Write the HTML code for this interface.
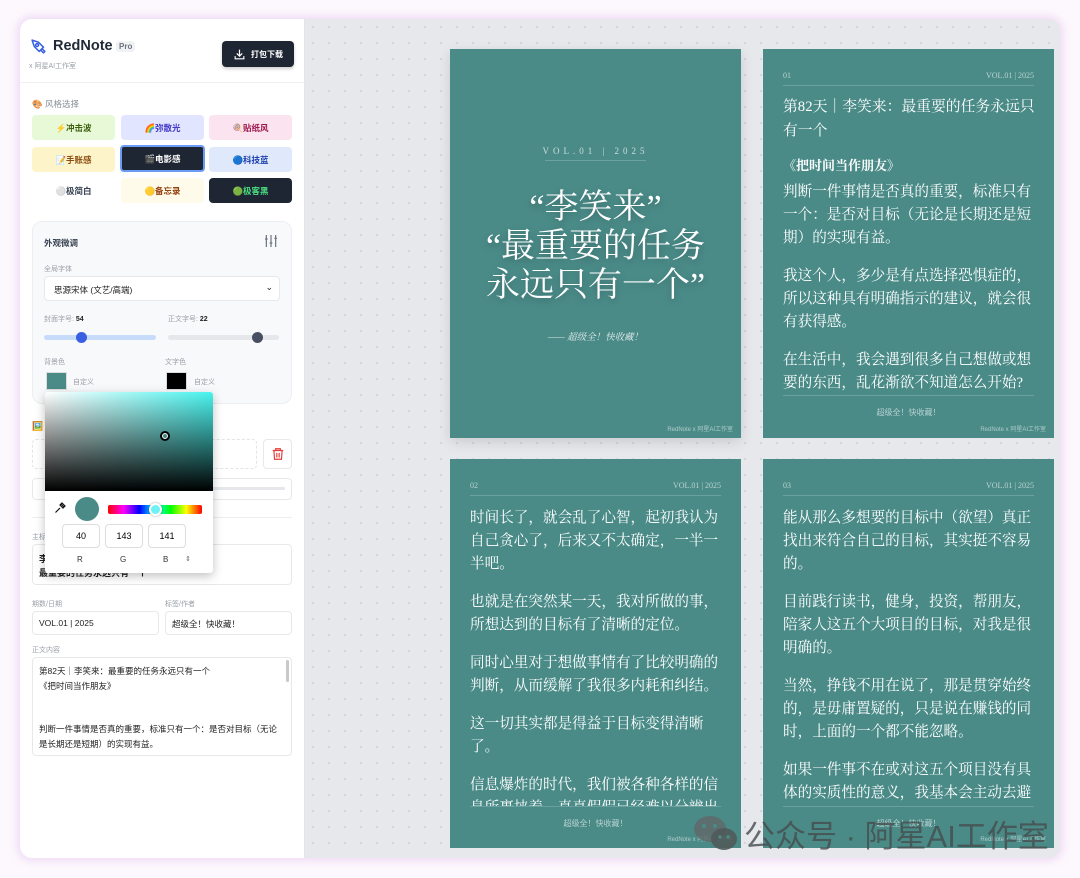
<!DOCTYPE html>
<html><head><meta charset="utf-8">
<style>
*{margin:0;padding:0;box-sizing:border-box}
body{width:1080px;height:878px;background:#fdf8fd;font-family:"Liberation Sans","Noto Sans CJK SC",sans-serif;position:relative;overflow:hidden}
.frame{position:absolute;left:20px;top:19px;width:1040px;height:839px;border-radius:12px;overflow:hidden;background:#e6e7eb;box-shadow:0 0 8px 3px rgba(230,200,240,.6)}
.left{position:absolute;left:0;top:0;width:285px;height:839px;background:#fff;border-right:1px solid #e4e4e8}
.right{position:absolute;left:285px;top:0;width:755px;height:839px;background-color:#e7e8ec;background-image:radial-gradient(#d2d4da 1px,transparent 1.2px);background-size:16px 16px}
.a{position:absolute}
.lbl{font-size:7px;color:#9aa0a8}
.btn{position:absolute;height:25px;width:83px;border-radius:4px;font-size:8.5px;font-weight:bold;display:flex;align-items:center;justify-content:center;gap:2px}
.box{position:absolute;background:#fff;border:1px solid #e6e8ec;border-radius:4px}
.card{position:absolute;width:291px;height:389px;background:#4a8b88;color:#fff;font-family:"Liberation Serif","Noto Serif CJK SC",serif;overflow:hidden}
.hd{position:absolute;left:20px;right:20px;top:22px;height:15px;border-bottom:1px solid rgba(255,255,255,.18);font-size:8px;color:rgba(255,255,255,.6);display:flex;justify-content:space-between}
.body{position:absolute;left:20px;right:19px;top:48px;font-size:14.6px;line-height:23px;color:#fff}
.body p{margin-bottom:15px}
.ft{position:absolute;left:20px;right:20px;height:1px;background:rgba(255,255,255,.18)}
.ft2{position:absolute;width:100%;text-align:center;font-size:8px;color:rgba(255,255,255,.6);font-family:"Liberation Sans","Noto Sans CJK SC",sans-serif}
.cr{position:absolute;right:8px;bottom:5px;font-size:6px;color:rgba(255,255,255,.55);font-family:"Liberation Sans","Noto Sans CJK SC",sans-serif}
</style></head><body>
<div class="frame">
<div class="left">
 <svg class="a" style="left:10px;top:19px" width="17" height="17" viewBox="0 0 24 24" fill="none" stroke="#3b63e0" stroke-width="2.2" stroke-linejoin="round"><path d="M3 3l9 3 7 7-6 6-7-7z"/><circle cx="10" cy="10" r="2"/><path d="M15 17l4 4 2-2-4-4"/></svg>
 <div class="a" style="left:33px;top:19px;font-size:14.5px;font-weight:bold;color:#1f2937">RedNote</div>
 <div class="a" style="left:96px;top:22px;font-size:8px;font-weight:bold;color:#6b7280;background:#f1f2f4;padding:1px 3px;border-radius:3px">Pro</div>
 <div class="a" style="left:9px;top:42px;font-size:7px;color:#9aa0a8">x 阿星AI工作室</div>
 <div class="a" style="left:202px;top:22px;width:72px;height:26px;background:#1e2533;border-radius:4px;color:#fff;font-size:8px;font-weight:bold;display:flex;align-items:center;justify-content:center;gap:5px;box-shadow:0 2px 3px rgba(0,0,0,.2)"><svg width="13" height="13" viewBox="0 0 24 24" fill="none" stroke="#fff" stroke-width="2.2"><path d="M12 3v12M7 10l5 5 5-5M4 15v5h16v-5"/></svg>打包下载</div>
 <div class="a" style="left:0;top:63px;width:285px;height:1px;background:#eef0f3"></div>
 <div class="a lbl" style="left:12px;top:79px;font-size:8.5px;color:#8a9099">🎨 风格选择</div>
 <div class="btn" style="left:12px;top:96px;background:#e7f9d6;color:#3f6212">⚡冲击波</div>
 <div class="btn" style="left:101px;top:96px;background:#e2e5ff;color:#4338ca">🌈弥散光</div>
 <div class="btn" style="left:189px;top:96px;background:#fbe4ef;color:#9d174d">🍭贴纸风</div>
 <div class="btn" style="left:12px;top:128px;background:#fdf5c9;color:#8a4b0f">📝手账感</div>
 <div class="btn" style="left:100px;top:126px;width:85px;height:27px;background:#1e2533;color:#fff;border:2px solid #6b9cf5">🎬电影感</div>
 <div class="btn" style="left:189px;top:128px;background:#dfe9fb;color:#1e40af">🔵科技蓝</div>
 <div class="btn" style="left:12px;top:159px;background:#fff;color:#374151">⚪极简白</div>
 <div class="btn" style="left:101px;top:159px;background:#fffbeb;color:#92400e">🟡备忘录</div>
 <div class="btn" style="left:189px;top:159px;background:#1e2533;color:#4ade80">🟢极客黑</div>
 <div class="a" style="left:12px;top:202px;width:260px;height:183px;background:#f8f9fb;border:1px solid #eceef1;border-radius:10px"></div>
 <div class="a" style="left:24px;top:218px;font-size:8.5px;font-weight:bold;color:#374151">外观微调</div>
 <svg class="a" style="left:243px;top:214px" width="16" height="16" viewBox="0 0 24 24" fill="none" stroke="#6b7280" stroke-width="1.8"><path d="M5 3v18M12 3v18M19 3v18M3 9h4M10 15h4M17 8h4"/></svg>
 <div class="a lbl" style="left:24px;top:245px">全局字体</div>
 <div class="box" style="left:24px;top:257px;width:236px;height:25px;font-size:8.5px;color:#222;padding:7px 9px">思源宋体 (文艺/高端)<span style="position:absolute;right:6px;top:5px;font-size:9px">⌄</span></div>
 <div class="a lbl" style="left:24px;top:295px">封面字号: <b style="color:#222">54</b></div>
 <div class="a lbl" style="left:148px;top:295px">正文字号: <b style="color:#222">22</b></div>
 <div class="a" style="left:24px;top:316px;width:112px;height:5px;background:#c7dbfb;border-radius:3px"></div>
 <div class="a" style="left:56px;top:313px;width:11px;height:11px;background:#3a5fe0;border-radius:50%"></div>
 <div class="a" style="left:148px;top:316px;width:111px;height:5px;background:#e5e7eb;border-radius:3px"></div>
 <div class="a" style="left:232px;top:313px;width:11px;height:11px;background:#475063;border-radius:50%"></div>
 <div class="a lbl" style="left:24px;top:338px">背景色</div>
 <div class="a lbl" style="left:145px;top:338px">文字色</div>
 <div class="a" style="left:26px;top:353px;width:21px;height:18px;background:#4a8b88;border:1px solid #ddd"></div>
 <div class="a lbl" style="left:53px;top:358px">自定义</div>
 <div class="a" style="left:146px;top:353px;width:21px;height:18px;background:#000;border:1px solid #ddd"></div>
 <div class="a lbl" style="left:174px;top:358px">自定义</div>
 <div class="a" style="left:12px;top:402px;font-size:9px">🖼️</div>
 <div class="a" style="left:12px;top:420px;width:225px;height:30px;border:1px dashed #e2e4e8;border-radius:4px"></div>
 <div class="box" style="left:243px;top:420px;width:29px;height:30px;display:flex;align-items:center;justify-content:center"><svg width="14" height="16" viewBox="0 0 24 24" fill="none" stroke="#e23b3b" stroke-width="2"><path d="M3 6h18M8 6V3h8v3M5 6l1 15h12l1-15M10 10v8M14 10v8"/></svg></div>
 <div class="box" style="left:12px;top:459px;width:260px;height:22px"></div>
 <div class="a" style="left:190px;top:468px;width:75px;height:3px;background:#e5e7eb;border-radius:2px"></div>
 <div class="a" style="left:12px;top:498px;width:260px;height:1px;background:#eceef1"></div>
 <div class="a lbl" style="left:12px;top:513px">主标</div>
 <div class="box" style="left:12px;top:525px;width:260px;height:41px;font-size:9px;font-weight:bold;color:#222;padding:7px 6px;line-height:14px">李<br>最重要的任务永远只有一个</div>
 <div class="a lbl" style="left:12px;top:580px">期数/日期</div>
 <div class="a lbl" style="left:145px;top:580px">标签/作者</div>
 <div class="box" style="left:12px;top:592px;width:127px;height:24px;font-size:8.5px;color:#222;padding:6px 6px">VOL.01 | 2025</div>
 <div class="box" style="left:145px;top:592px;width:127px;height:24px;font-size:8.5px;color:#222;padding:6px 6px">超级全！快收藏！</div>
 <div class="a lbl" style="left:12px;top:626px">正文内容</div>
 <div class="box" style="left:12px;top:638px;width:260px;height:99px;font-size:8.5px;color:#222;padding:6px 6px;line-height:14.5px">第82天｜李笑来：最重要的任务永远只有一个<br>《把时间当作朋友》<br><br><br>判断一件事情是否真的重要，标准只有一个：是否对目标（无论是长期还是短期）的实现有益。<div style="position:absolute;right:2px;top:2px;width:3px;height:22px;background:#c9c9c9;border-radius:2px"></div></div>
 <div class="a" style="left:25px;top:373px;width:168px;height:181px;background:#fff;border-radius:3px;box-shadow:0 3px 10px rgba(0,0,0,.25);overflow:hidden">
  <div style="position:absolute;left:0;top:0;width:168px;height:99px;background:linear-gradient(to top,#000,transparent),linear-gradient(to right,#fff,#48f3ee)"></div>
  <div style="position:absolute;left:115px;top:39px;width:10px;height:10px;border:2px solid #000;border-radius:50%;box-shadow:inset 0 0 0 1px #fff"></div>
  <svg style="position:absolute;left:9px;top:110px" width="12" height="12" viewBox="0 0 24 24" fill="none" stroke="#111" stroke-width="2.4"><path d="M3 21l9-9M14 4l6 6M16 2l6 6-4 4-6-6z"/></svg>
  <div style="position:absolute;left:30px;top:105px;width:24px;height:24px;border-radius:50%;background:#4a8b88"></div>
  <div style="position:absolute;left:63px;top:113px;width:94px;height:9px;border-radius:2px;background:linear-gradient(to right,#f00,#f0f,#00f,#0ff,#0f0,#ff0,#f00)"></div>
  <div style="position:absolute;left:104px;top:111px;width:13px;height:13px;border-radius:50%;background:#6ef1f5;border:2px solid #fff;box-shadow:0 0 2px rgba(0,0,0,.4)"></div>
  <div class="box" style="left:17px;top:132px;width:38px;height:24px;font-size:9px;text-align:center;line-height:22px;border-color:#ddd">40</div>
  <div class="box" style="left:60px;top:132px;width:38px;height:24px;font-size:9px;text-align:center;line-height:22px;border-color:#ddd">143</div>
  <div class="box" style="left:103px;top:132px;width:38px;height:24px;font-size:9px;text-align:center;line-height:22px;border-color:#ddd">141</div>
  <div style="position:absolute;top:163px;left:32px;font-size:8px;color:#333">R</div>
  <div style="position:absolute;top:163px;left:75px;font-size:8px;color:#333">G</div>
  <div style="position:absolute;top:163px;left:118px;font-size:8px;color:#333">B</div>
  <div style="position:absolute;top:163px;left:140px;font-size:7px;color:#666">⇕</div>
 </div>
</div>
<div class="right">
 <div class="card" style="left:145px;top:30px;box-shadow:0 4px 12px rgba(0,0,0,.12)">
  <div style="position:absolute;left:0;width:100%;top:97px;text-align:center;font-size:9px;letter-spacing:4px;color:rgba(255,255,255,.7)">VOL.01 | 2025</div>
  <div style="position:absolute;left:95px;width:101px;top:111px;height:1px;background:rgba(255,255,255,.2)"></div>
  <div style="position:absolute;left:0;width:100%;top:139px;text-align:center;font-size:34px;line-height:39px;text-shadow:0 3px 8px rgba(0,0,0,.25)">“李笑来”<br>“最重要的任务<br>永远只有一个”</div>
  <div style="position:absolute;left:0;width:100%;top:280px;text-align:center;font-size:9.5px;font-style:italic;color:rgba(255,255,255,.85)">—— 超级全！快收藏！</div>
  <div class="cr">RedNote x 阿星AI工作室</div>
 </div>
 <div class="card" style="left:458px;top:30px">
  <div class="hd"><span>01</span><span>VOL.01 | 2025</span></div>
  <div class="body" style="top:46px;right:16px">
   <p style="font-size:14.8px;line-height:24px;margin-bottom:11px">第82天｜李笑来：最重要的任务永远只有一个</p>
   <p style="font-size:13px;font-weight:bold;margin-bottom:4px">《把时间当作朋友》</p>
   <p style="margin-right:3px">判断一件事情是否真的重要，标准只有一个：是否对目标（无论是长期还是短期）的实现有益。</p>
   <p style="margin-right:3px">我这个人，多少是有点选择恐惧症的，所以这种具有明确指示的建议，就会很有获得感。</p>
   <p style="margin-right:3px">在生活中，我会遇到很多自己想做或想要的东西，乱花渐欲不知道怎么开始?</p>
  </div>
  <div class="ft" style="top:346px"></div>
  <div class="ft2" style="top:358px">超级全！快收藏！</div>
  <div class="cr">RedNote x 阿星AI工作室</div>
 </div>
 <div class="card" style="left:145px;top:440px">
  <div class="hd"><span>02</span><span>VOL.01 | 2025</span></div>
  <div class="body" style="height:299px;overflow:hidden">
   <p>时间长了，就会乱了心智，起初我认为自己贪心了，后来又不太确定，一半一半吧。</p>
   <p>也就是在突然某一天，我对所做的事，所想达到的目标有了清晰的定位。</p>
   <p>同时心里对于想做事情有了比较明确的判断，从而缓解了我很多内耗和纠结。</p>
   <p>这一切其实都是得益于目标变得清晰了。</p>
   <p>信息爆炸的时代，我们被各种各样的信息所裹挟着，真真假假已经难以分辨出</p>
  </div>
  <div class="ft" style="top:347px"></div>
  <div class="ft2" style="top:359px">超级全！快收藏！</div>
  <div class="cr">RedNote x 阿星AI工作室</div>
 </div>
 <div class="card" style="left:458px;top:440px">
  <div class="hd"><span>03</span><span>VOL.01 | 2025</span></div>
  <div class="body" style="height:299px;overflow:hidden">
   <p>能从那么多想要的目标中（欲望）真正找出来符合自己的目标，其实挺不容易的。</p>
   <p>目前践行读书，健身，投资，帮朋友，陪家人这五个大项目的目标，对我是很明确的。</p>
   <p>当然，挣钱不用在说了，那是贯穿始终的，是毋庸置疑的，只是说在赚钱的同时，上面的一个都不能忽略。</p>
   <p>如果一件事不在或对这五个项目没有具体的实质性的意义，我基本会主动去避开。</p>
  </div>
  <div class="ft" style="top:347px"></div>
  <div class="ft2" style="top:359px">超级全！快收藏！</div>
  <div class="cr">RedNote x 阿星AI工作室</div>
 </div>
</div>
</div>
<svg class="a" style="left:693px;top:814px" width="46" height="38" viewBox="0 0 46 38"><ellipse cx="17" cy="15" rx="16" ry="13" fill="#5f6a6a" opacity=".85"/><ellipse cx="31" cy="25" rx="13" ry="11" fill="#4f5a5a" opacity=".9"/><circle cx="11" cy="12" r="2" fill="#4a8b88"/><circle cx="22" cy="12" r="2" fill="#4a8b88"/><circle cx="27" cy="23" r="1.7" fill="#4a8b88"/><circle cx="35" cy="23" r="1.7" fill="#4a8b88"/></svg>
<div class="a" style="left:744px;top:811px;font-size:31px;color:rgba(70,75,78,.8);font-family:'Liberation Sans','Noto Sans CJK SC',sans-serif;white-space:nowrap">公众号 · 阿星AI工作室</div>
</body></html>
